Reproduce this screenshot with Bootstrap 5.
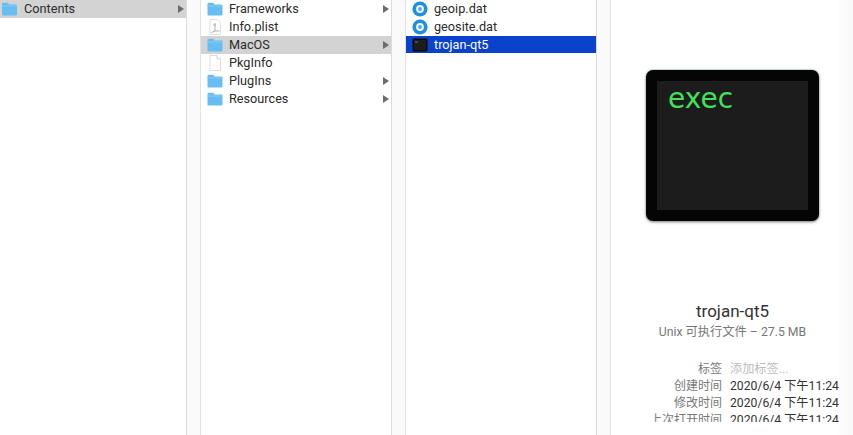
<!DOCTYPE html>
<html lang="en">
<head>
  <meta charset="UTF-8" />
  <title>Finder</title>
  <link href="https://cdn.jsdelivr.net/npm/bootstrap@5.3.0/dist/css/bootstrap.min.css" rel="stylesheet">
  <style>
    html, body { height: 100%; }
    body {
      background: #fff;
      overflow: hidden;
      font-family: Roboto, "Noto Sans CJK SC", sans-serif;
      color: #2b2b2b;
    }
    .finder { width: 853px; height: 435px; }
    .col-pane {
      height: 435px;
      border-right: 1px solid #dcdcdc;
      flex: none;
    }
    .pane-a { width: 187px; }
    .pane-list { width: 191px; }
    .gutter { width: 14px; flex: none; background: #fafafa; border-right: 1px solid #e2e2e2; }
    .file-row {
      height: 18px;
      font-size: 12.7px;
      line-height: 18px;
      white-space: nowrap;
      padding-left: 6px;
    }
    .file-row svg { flex: none; }
    .file-name { margin-left: 6px; }
    .row-first { padding-left: 1px; }
    .row-open { background: #d3d3d3; }
    .row-sel { background: #0a42cc; color: #fff; height: 17px; }
    .tri {
      margin-left: auto;
      margin-right: 2px;
      width: 0; height: 0;
      border-left: 6px solid #6c6c6c;
      border-top: 4px solid transparent;
      border-bottom: 4px solid transparent;
    }
    .preview { flex: 1; height: 435px; background: linear-gradient(to right, #fff 225px, #f7f7f7 242px); }
    .preview-body { width: 243px; height: 422px; overflow: hidden; }
    .exec-icon {
      width: 173px; height: 151px;
      flex: none;
      margin-top: 70px;
      background: #050505;
      border-radius: 7px;
      box-shadow: 0 1px 3px rgba(0,0,0,.55), 0 -1px 1px rgba(120,190,190,.35);
      padding: 11px;
    }
    .exec-screen {
      height: 100%;
      background: #1c1c1c;
      color: #45e05a;
      font-family: "DejaVu Sans", sans-serif;
      font-size: 28px;
      line-height: 36px;
      padding-left: 11px;
    }
    .pv-title { font-size: 17px; line-height: 20px; margin-top: 80px; color: #333; flex: none; }
    .pv-sub { font-size: 12.25px; line-height: 17px; margin-top: 3px; color: #777; flex: none; }
    .meta { margin-top: 20px; font-size: 12.2px; line-height: 17px; width: 100%; flex: none; }
    .meta-key { width: 111px; font-size: 12px; text-align: right; color: #777; flex: none; white-space: nowrap; }
    .meta-val { margin-left: 8px; white-space: nowrap; color: #333; }
    .meta-hint { color: #bdbdbd; }
  </style>
</head>
<body>
<svg width="0" height="0" class="position-absolute">
  <defs>
    <symbol id="folder" viewBox="0 0 16 14">
      <path d="M0.5 2.2C0.5 1.3 1.1 .8 2 .8h3.6c.7 0 1 .3 1.4 1l.4.6h7c.8 0 1.1.4 1.1 1.2v8.6c0 .8-.4 1.2-1.2 1.2H1.7C.9 13.4.5 13 .5 12.2z" fill="#66bdf2"/>
      <path d="M.5 3.6h15v.8H.5z" fill="#8fd0f7"/>
    </symbol>
    <symbol id="doc" viewBox="0 0 14 16">
      <path d="M2 .5h7l3.5 3.5v11.5H2z" fill="#fff" stroke="#d2d2d2" stroke-width=".8"/>
      <path d="M9 .5V4h3.5" fill="#f2f2f2" stroke="#d2d2d2" stroke-width=".8"/>
    </symbol>
    <symbol id="plist" viewBox="0 0 14 16">
      <path d="M2 .5h7l3.5 3.5v11.5H2z" fill="#fff" stroke="#d8d8d8" stroke-width=".8"/>
      <path d="M7 4v8M7 12l-3.5 1.5M7 12h4.5M5 6h3" stroke="#a8a8a8" stroke-width=".9" fill="none"/>
    </symbol>
    <symbol id="dat" viewBox="0 0 16 16">
      <circle cx="8" cy="8" r="7.6" fill="#1f8fe0"/>
      <circle cx="8" cy="8" r="3.9" fill="#f4fbff"/>
      <circle cx="8" cy="8" r="1.9" fill="#4aa8ee"/>
    </symbol>
    <symbol id="term" viewBox="0 0 16 14">
      <rect x=".5" y=".5" width="15" height="13" rx="1.2" fill="#0a0a0a"/>
      <rect x="2" y="2" width="12" height="10" fill="#1d1d1d"/>
      <path d="M3 4h3" stroke="#4d8f58" stroke-width="1"/>
    </symbol>
  </defs>
</svg>
<div class="finder d-flex">
  <div class="col-pane pane-a">
    <div class="file-row row-first row-open d-flex align-items-center">
      <svg width="17" height="14"><use href="#folder"/></svg><span class="file-name">Contents</span><i class="tri"></i>
    </div>
  </div>
  <div class="gutter"></div>
  <div class="col-pane pane-list">
    <div class="file-row d-flex align-items-center"><svg width="16" height="14"><use href="#folder"/></svg><span class="file-name">Frameworks</span><i class="tri"></i></div>
    <div class="file-row d-flex align-items-center"><svg width="16" height="16"><use href="#plist"/></svg><span class="file-name">Info.plist</span></div>
    <div class="file-row row-open d-flex align-items-center"><svg width="16" height="14"><use href="#folder"/></svg><span class="file-name">MacOS</span><i class="tri"></i></div>
    <div class="file-row d-flex align-items-center"><svg width="16" height="16"><use href="#doc"/></svg><span class="file-name">PkgInfo</span></div>
    <div class="file-row d-flex align-items-center"><svg width="16" height="14"><use href="#folder"/></svg><span class="file-name">PlugIns</span><i class="tri"></i></div>
    <div class="file-row d-flex align-items-center"><svg width="16" height="14"><use href="#folder"/></svg><span class="file-name">Resources</span><i class="tri"></i></div>
  </div>
  <div class="gutter"></div>
  <div class="col-pane pane-list">
    <div class="file-row d-flex align-items-center"><svg width="16" height="16"><use href="#dat"/></svg><span class="file-name">geoip.dat</span></div>
    <div class="file-row d-flex align-items-center"><svg width="16" height="16"><use href="#dat"/></svg><span class="file-name">geosite.dat</span></div>
    <div class="file-row row-sel d-flex align-items-center"><svg width="16" height="14"><use href="#term"/></svg><span class="file-name">trojan-qt5</span></div>
  </div>
  <div class="gutter"></div>
  <div class="preview">
    <div class="preview-body d-flex flex-column align-items-center">
      <div class="exec-icon"><div class="exec-screen">exec</div></div>
      <div class="pv-title">trojan-qt5</div>
      <div class="pv-sub">Unix 可执行文件 – 27.5 MB</div>
      <div class="meta">
        <div class="d-flex"><span class="meta-key">标签</span><span class="meta-val meta-hint">添加标签...</span></div>
        <div class="d-flex"><span class="meta-key">创建时间</span><span class="meta-val">2020/6/4 下午11:24</span></div>
        <div class="d-flex"><span class="meta-key">修改时间</span><span class="meta-val">2020/6/4 下午11:24</span></div>
        <div class="d-flex"><span class="meta-key">上次打开时间</span><span class="meta-val">2020/6/4 下午11:24</span></div>
      </div>
    </div>
  </div>
</div>
<script src="https://cdn.jsdelivr.net/npm/bootstrap@5.3.0/dist/js/bootstrap.bundle.min.js"></script>
</body>
</html>
